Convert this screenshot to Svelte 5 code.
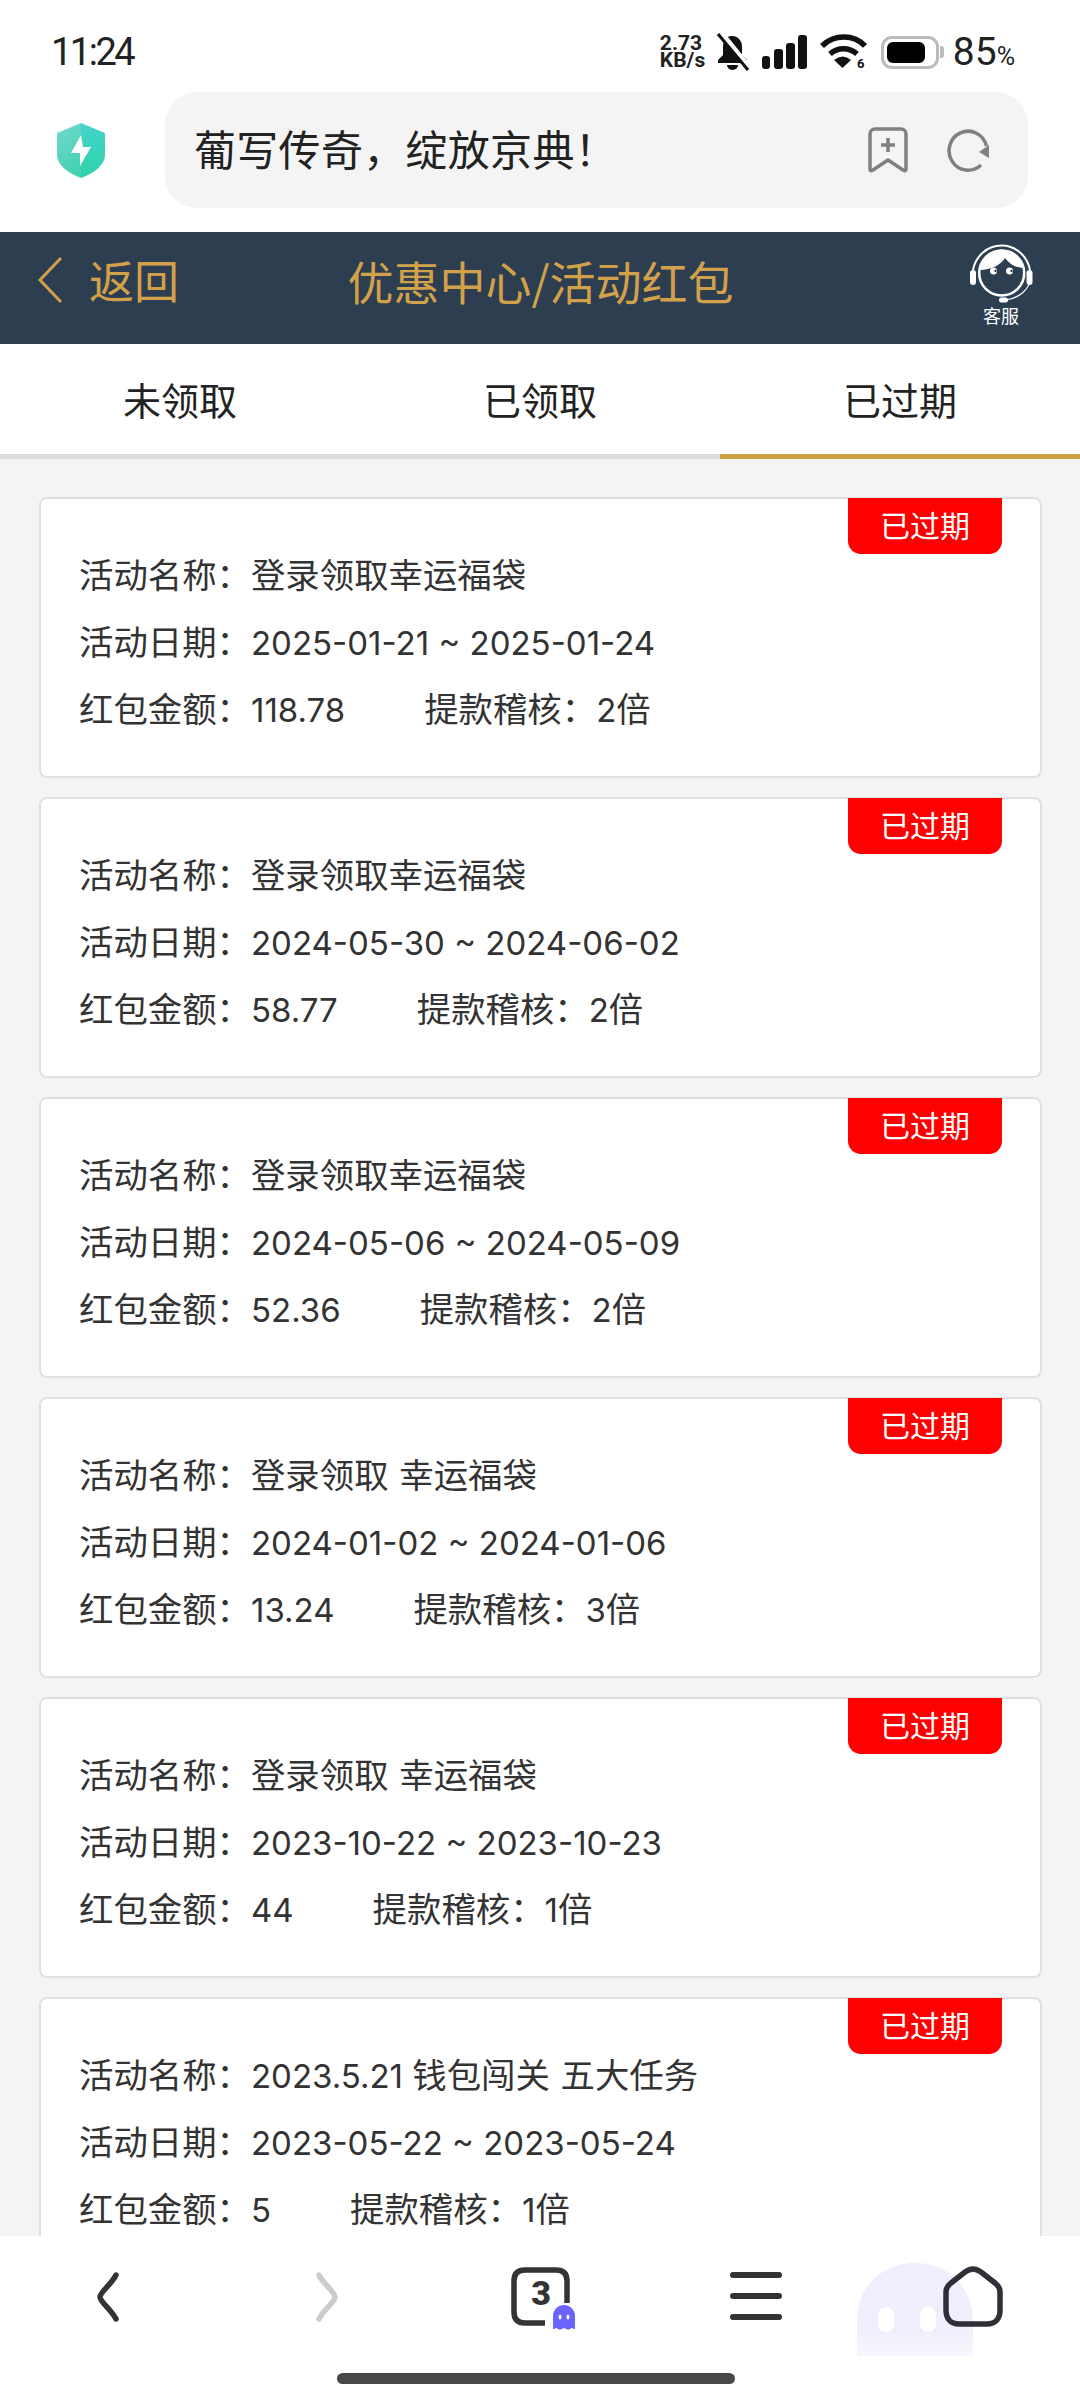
<script>
  const cards = [
    { num: '', name: '登录领取幸运福袋', date: '2025-01-21 ~ 2025-01-24', amount: '118.78', audit: '2', },
    { num: '', name: '登录领取幸运福袋', date: '2024-05-30 ~ 2024-06-02', amount: '58.77', audit: '2' },
    { num: '', name: '登录领取幸运福袋', date: '2024-05-06 ~ 2024-05-09', amount: '52.36', audit: '2' },
    { num: '', name: '登录领取 幸运福袋', date: '2024-01-02 ~ 2024-01-06', amount: '13.24', audit: '3' },
    { num: '', name: '登录领取 幸运福袋', date: '2023-10-22 ~ 2023-10-23', amount: '44', audit: '1' },
    { num: '2023.5.21 ', name: '钱包闯关 五大任务', date: '2023-05-22 ~ 2023-05-24', amount: '5', audit: '1' }
  ];
</script>

<div class="page">
  <div class="status">
    <span class="time">11:24</span>
    <div class="sicons">
      <span class="speed">2.73<br />KB/s</span>
      <svg class="bell" width="33" height="38" viewBox="0 0 33 38"><path d="M16 3c-6 0-9 5-9 10v9l-5 5v3h29v-3l-5-5v-9c0-5-4-10-10-10z" fill="#111"/><path d="M11 32h11a5.500 5 0 0 1-11 0z" fill="#111"/><path d="M4 -1l30 37" stroke="#fff" stroke-width="6"/><path d="M2 1l30 36" stroke="#111" stroke-width="3"/></svg>
      <svg class="signal" width="45" height="34" viewBox="0 0 45 34"><rect x="0" y="21" width="8" height="13" rx="3" fill="#111"/><rect x="12" y="14" width="9" height="20" rx="3" fill="#111"/><rect x="24" y="8" width="9" height="26" rx="3" fill="#111"/><rect x="36" y="0" width="9" height="34" rx="3" fill="#111"/></svg>
      <svg class="wifi" width="47" height="40" viewBox="0 0 47 40"><path d="M2 12c12-12 32-12 43 0" fill="none" stroke="#111" stroke-width="5.500"/><path d="M10 20c8-7 19-7 27 0" fill="none" stroke="#111" stroke-width="5.500"/><path d="M14 26q9-7 17 0l-8.500 8z" fill="#111"/><text x="37" y="34" font-size="13" font-weight="700" font-family="Roboto" fill="#111">6</text></svg>
      <div class="battery"><div class="fill"></div></div>
      <i class="nub"></i>
      <span class="pct">85<small>%</small></span>
    </div>
  </div>

  <div class="addr">
    <svg class="shield" width="48" height="55" viewBox="0 0 48 55">
      <defs>
        <linearGradient id="sl" x1="0" y1="0" x2="0.4" y2="1"><stop offset="0" stop-color="#72d7d0"/><stop offset="1" stop-color="#46d3b4"/></linearGradient>
        <linearGradient id="sr" x1="0.5" y1="0" x2="0.5" y2="1"><stop offset="0" stop-color="#45d4cd"/><stop offset="1" stop-color="#2dd2a8"/></linearGradient>
      </defs>
      <path d="M24 0L0 10v22c0 10 11 18 24 23z" fill="url(#sl)"/>
      <path d="M24 0l24 10v22c0 10-11 18-24 23z" fill="url(#sr)"/>
      <path d="M24 12L14 30h9v13l11-19h-8z" fill="#fff"/>
    </svg>
    <div class="pill">
      <span class="ptext">葡写传奇，绽放京典！</span>
      <svg width="40" height="46" viewBox="0 0 40 46"><path d="M2 7a5 5 0 0 1 5-5h26a5 5 0 0 1 5 5v35q0 3-3 1L20 33 5 43q-3 2-3-1z" fill="none" stroke="#808080" stroke-width="3.500" stroke-linejoin="round"/><path d="M20 11v14M13 18h14" stroke="#808080" stroke-width="3.500"/></svg>
      <svg width="43" height="43" viewBox="0 0 43 43"><path d="M34 36A19 19.500 0 1 1 39.500 17" fill="none" stroke="#808080" stroke-width="3.500"/><path d="M42 16v13l-10-6z" fill="#808080"/></svg>
    </div>
  </div>

  <header class="head">
    <div class="back">
      <svg width="24" height="46" viewBox="0 0 24 46"><path d="M23 1L2 23l21 22" fill="none" stroke="#d4a14b" stroke-width="3"/></svg>
      <span>返回</span>
    </div>
    <div class="title">优惠中心/活动红包</div>
    <div class="cs">
      <svg width="64" height="63" viewBox="49 13 64 63">
        <path d="M53 50a29 30 0 0 1 57 0" transform="translate(0 -8)" fill="none" stroke="#fff" stroke-width="2"/>
        <circle cx="81.700" cy="45" r="22.500" fill="none" stroke="#fff" stroke-width="2.500"/>
        <path d="M59.500 42a22.500 22.500 0 0 1 44.500-2c-7 0-14-3-19-10-4 7-14 12-25.500 12z" fill="#fff"/>
        <rect x="50" y="42" width="6" height="15" rx="3" fill="#fff"/><rect x="106.500" y="42" width="6" height="15" rx="3" fill="#fff"/>
        <circle cx="73.500" cy="43" r="3.500" fill="#fff"/><circle cx="89.500" cy="43" r="3.500" fill="#fff"/>
        <circle cx="75.500" cy="43" r="1.200" fill="#2d3e50"/><circle cx="91.500" cy="43" r="1.200" fill="#2d3e50"/>
        <path d="M111 50c-2 12-12 20-25 22" fill="none" stroke="#fff" stroke-width="1.200"/><rect x="79" y="69.500" width="9" height="5" rx="2.500" fill="#fff"/>
      </svg>
      <span>客服</span>
    </div>
  </header>

  <nav class="tabs">
    <div class="tab">未领取</div>
    <div class="tab">已领取</div>
    <div class="tab active">已过期</div>
  </nav>

  <main class="list">
    {#each cards as c}
      <section class="card">
        <div class="badge">已过期</div>
        <p>活动名称：<span class="num">{c.num}</span>{c.name}</p>
        <p>活动日期：<span class="num">{c.date}</span></p>
        <p class="row"><span>红包金额：<span class="num">{c.amount}</span></span><span>提款稽核：<span class="num">{c.audit}</span>倍</span></p>
      </section>
    {/each}
  </main>

  <footer class="bottom">
    <div class="icons">
      <svg class="prev" width="24" height="50" viewBox="0 0 24 50"><path d="M20 3C15 13 4 20 4 25s11 12 16 22" fill="none" stroke="#333" stroke-width="5.500" stroke-linecap="round"/></svg>
      <svg class="next" width="24" height="50" viewBox="0 0 24 50"><path d="M4 3c5 10 16 17 16 22S9 37 4 47" fill="none" stroke="#ccc" stroke-width="5.500" stroke-linecap="round"/></svg>
      <div class="tabsbtn">
        <svg width="66" height="66" viewBox="0 0 66 66">
          <path d="M34 56H14Q3 56 3 45V14Q3 3 14 3h31q11 0 11 11v22" fill="none" stroke="#333" stroke-width="5.500"/>
          <text x="30" y="38" text-anchor="middle" font-family="Roboto" font-weight="900" font-size="34" fill="#333">3</text>
          <path d="M41 64V49a12 12 0 0 1 24 0v15l-4-2-4 2-4-2-4 2-4-2z" fill="#6a63ff" stroke="#fff" stroke-width="2"/>
          <ellipse cx="49" cy="50" rx="1.500" ry="2.500" fill="#fff"/><ellipse cx="57" cy="50" rx="1.500" ry="2.500" fill="#fff"/>
        </svg>
      </div>
      <div class="menu"><i></i><i></i><i></i></div>
      <div class="home">
        <svg class="bigghost" width="116" height="93" viewBox="0 0 116 93">
          <defs><linearGradient id="gh" x1="0" y1="0" x2="0" y2="1"><stop offset="0" stop-color="#eeeefc"/><stop offset="0.65" stop-color="#eeeefc"/><stop offset="1" stop-color="#f6f6fd"/></linearGradient></defs>
          <path d="M0 93V58C0 24 25 0 58 0s58 24 58 58v35z" fill="url(#gh)"/>
          <rect x="21" y="44" width="16" height="25" rx="8" fill="#fff"/><rect x="63" y="44" width="16" height="25" rx="8" fill="#fff"/>
        </svg>
        <svg class="hicon" width="60" height="61" viewBox="0 0 60 61"><path d="M30 3c3 0 5 1 8 3l14 11c4 3 5 5 5 9v18c0 9-5 14-13 14H16C8 58 3 53 3 44V26c0-4 1-6 5-9L22 6c3-2 5-3 8-3z" fill="none" stroke="#2f2f38" stroke-width="5.500"/></svg>
      </div>
    </div>
    <div class="indicator"></div>
  </footer>
</div>

<style>
  :global(body) { margin: 0; background: #fff; }
  .page { width: 1080px; height: 2400px; overflow: hidden; position: relative; font-family: "Noto Sans CJK SC", "Noto Sans", sans-serif; color: #333; background: #f3f4f6; }
  .status { height: 68px; padding: 18px 65px 0 51px; background: #fff; display: flex; justify-content: space-between; align-items: center; }
  .time { font: 38px Roboto, sans-serif; letter-spacing: -2.500px; color: #222; }
  .sicons { display: flex; align-items: center; }
  .speed { font: 700 21px/17px Roboto, sans-serif; color: #222; width: 48px; margin-left: -3px; }
  .bell { margin-left: 8px; }
  .signal { margin-left: 13px; }
  .wifi { margin-left: 13px; margin-top: 4px; }
  .battery { width: 58px; height: 33px; border: 3px solid #bbb; border-radius: 11px; padding: 3px; box-sizing: border-box; margin-left: 14px; }
  .fill { width: 84%; height: 100%; background: #000; border-radius: 6px; }
  .nub { width: 4px; height: 12px; background: #bbb; border-radius: 0 3px 3px 0; margin-left: 1px; }
  .pct { font: 39px Roboto, sans-serif; color: #222; margin-left: 9px; white-space: nowrap; }
  .pct small { font-size: 25px; }
  .addr { height: 128px; padding-bottom: 18px; background: #fff; display: flex; align-items: center; padding-left: 57px; }
  .shield { margin-right: 60px; }
  .pill { width: 863px; height: 116px; background: #f4f4f4; border-radius: 32px; display: flex; align-items: center; box-sizing: border-box; padding: 0 38px 0 29px; gap: 39px; }
  .ptext { flex: 1; font-size: 42px; color: #222; letter-spacing: 0.300px; white-space: nowrap; margin-bottom: 6px; }
  .head { height: 95px; padding: 0 47px 17px 38px; background: #2d3e50; display: grid; grid-template-columns: 1fr auto 1fr; align-items: center; color: #d4a14b; }
  .back { display: flex; align-items: center; gap: 27px; font-size: 45px; }
  .title { font-size: 46px; white-space: nowrap; margin-left: 10px; }
  .cs { justify-self: end; display: flex; flex-direction: column; align-items: center; color: #fff; font-size: 18px; line-height: 22px; margin-top: 8px; }
  .cs svg { display: block; }
  .tabs { height: 115px; background: #fff; display: flex; }
  .tab { flex: 1; display: flex; align-items: center; justify-content: center; font-size: 38px; border-bottom: 5px solid #dcdcdc; padding-bottom: 2px; color: #222; }
  .tab.active { border-color: #cc9f45; }
  .list { padding: 38px 38px 0 39px; display: flex; flex-direction: column; gap: 19px; }
  .card { position: relative; height: 281px; box-sizing: border-box; background: #fff; border: 2px solid #e0e0e0; border-radius: 8px; padding: 41px 0 0 38px; font-size: 34.400px; }
  .card p { margin: 0; height: 67px; line-height: 67px; white-space: pre; word-spacing: 3px; }
  .num { font-family: Inter, sans-serif; font-size: 33px; word-spacing: 0; }
  .row { display: flex; gap: 79px; }
  .badge { position: absolute; top: -1px; right: 38px; width: 154px; height: 56px; padding-bottom: 4px; box-sizing: border-box; background: #f00; color: #fff; font-size: 30px; display: flex; align-items: center; justify-content: center; border-radius: 0 0 13px 13px; }
  .bottom { position: absolute; left: 0; right: 0; bottom: 0; height: 164px; background: #fff; }
  .icons { display: flex; align-items: flex-start; padding-left: 96px; height: 120px; }
  .icons svg { display: block; }
  .prev { margin-top: 36px; }
  .next { margin: 36px 0 0 195px; }
  .tabsbtn { margin: 31px 0 0 172px; width: 66px; height: 66px; }
  .menu { margin: 36px 0 0 153px; width: 52px; display: flex; flex-direction: column; gap: 15px; }
  .menu i { display: block; height: 6px; background: #333; border-radius: 3px; }
  .home { margin: 27px 0 0 75px; width: 146px; height: 93px; position: relative; }
  .hicon { position: absolute; left: 86px; top: 3px; }
  .indicator { margin: 17px 0 0 337px; width: 398px; height: 11px; background: #484848; border-radius: 6px; }
</style>
